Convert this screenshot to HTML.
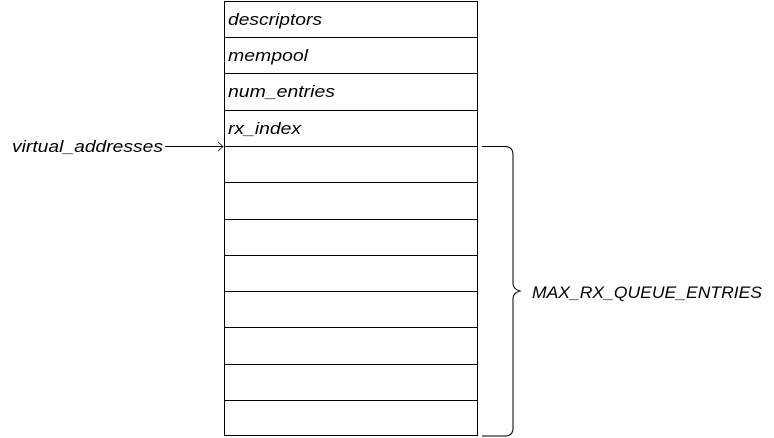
<!DOCTYPE html>
<html><head><meta charset="utf-8"><style>
html,body{margin:0;padding:0;background:#fff;width:774px;height:438px;overflow:hidden}
text{font-family:"Liberation Sans",sans-serif;font-style:italic;font-size:17px;fill:#000}
</style></head><body>
<svg width="774" height="438" viewBox="0 0 774 438" xmlns="http://www.w3.org/2000/svg">
<g stroke="#000" stroke-width="1" fill="none" shape-rendering="crispEdges">
<rect x="224.5" y="1.5" width="253" height="434"/>
<line x1="224" y1="37.5" x2="478" y2="37.5"/>
<line x1="224" y1="73.5" x2="478" y2="73.5"/>
<line x1="224" y1="110.5" x2="478" y2="110.5"/>
<line x1="224" y1="146.5" x2="478" y2="146.5"/>
<line x1="224" y1="182.5" x2="478" y2="182.5"/>
<line x1="224" y1="219.5" x2="478" y2="219.5"/>
<line x1="224" y1="255.5" x2="478" y2="255.5"/>
<line x1="224" y1="291.5" x2="478" y2="291.5"/>
<line x1="224" y1="327.5" x2="478" y2="327.5"/>
<line x1="224" y1="364.5" x2="478" y2="364.5"/>
<line x1="224" y1="400.5" x2="478" y2="400.5"/>
<line x1="165" y1="146.5" x2="223" y2="146.5"/>
</g>
<path d="M218 142 L223 146.5 L218 151" stroke="#000" fill="none" stroke-width="0.8"/>
<path d="M482 146.5 L505 146.5 Q513 146.5 513 155 L513 283 Q513 289 520 291 Q513 293 513 299 L513 428 Q513 436 505 436 L482 436" stroke="#000" fill="none" stroke-width="1"/>
<text x="228" y="25" textLength="94" lengthAdjust="spacingAndGlyphs">descriptors</text>
<text x="228" y="61" textLength="80" lengthAdjust="spacingAndGlyphs">mempool</text>
<text x="228" y="97" textLength="107" lengthAdjust="spacingAndGlyphs">num_entries</text>
<text x="228" y="134" textLength="73" lengthAdjust="spacingAndGlyphs">rx_index</text>
<text x="12" y="152" textLength="151" lengthAdjust="spacingAndGlyphs">virtual_addresses</text>
<text x="532" y="298" textLength="230" lengthAdjust="spacingAndGlyphs">MAX_RX_QUEUE_ENTRIES</text>
</svg>
</body></html>
